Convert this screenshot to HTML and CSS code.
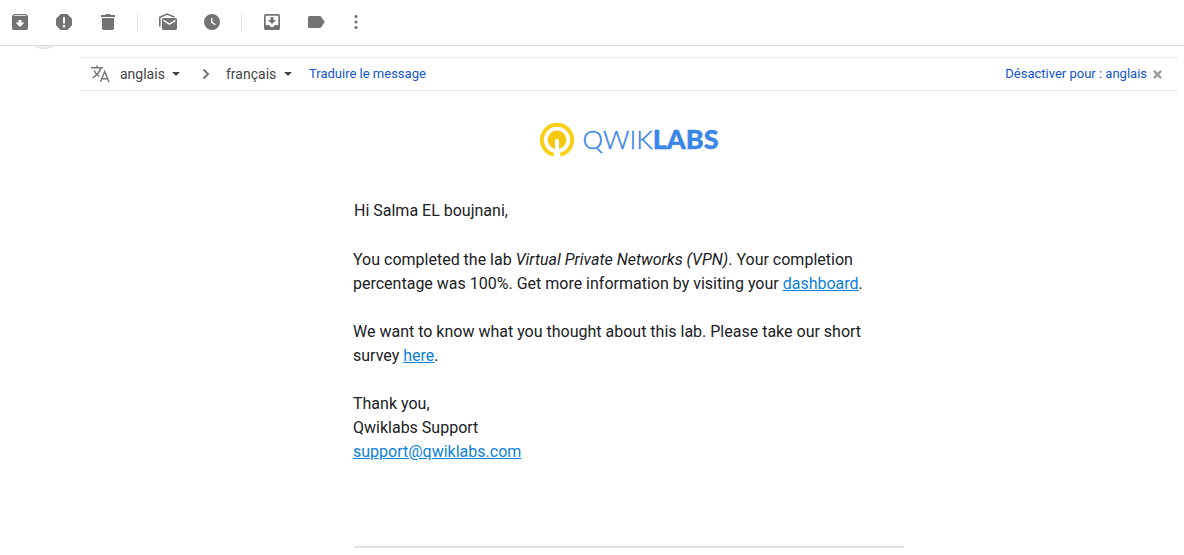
FILE: index.html
```html
<!DOCTYPE html>
<html lang="fr">
<head>
<meta charset="utf-8">
<meta name="viewport" content="width=device-width, initial-scale=1">
<title>Qwiklabs</title>
<link rel="stylesheet" href="styles.css">
</head>
<body>
<header class="toolbar">
  <div class="group">
    <button class="tool" type="button" aria-label="Archiver"><svg viewBox="0 0 20 20"><path fill-rule="evenodd" d="M4 2h12l2 2v12.300a1.700 1.700 0 0 1-1.700 1.700H3.700A1.700 1.700 0 0 1 2 16.300V4zM4.300 3.200 3.700 4h12.600l-.6-.8zM8.500 8v2.500H5.500L10 15l4.500-4.500h-3V8z"/></svg></button>
    <button class="tool" type="button" aria-label="Signaler comme spam"><svg viewBox="0 0 20 20"><path fill-rule="evenodd" d="M6.700 2h6.600L18 6.700v6.600L13.300 18H6.700L2 13.300V6.700zM9 5v6.500h2V5zM10 12.900a1.300 1.300 0 1 0 0 2.600 1.300 1.300 0 0 0 0-2.600z"/></svg></button>
    <button class="tool" type="button" aria-label="Supprimer"><svg viewBox="0 0 20 20"><path d="M3 3h4l1-1h4l1 1h4v2H3zM4 6h12v10.300a1.700 1.700 0 0 1-1.700 1.700H5.700A1.700 1.700 0 0 1 4 16.300z"/></svg></button>
  </div>
  <div class="group">
    <button class="tool" type="button" aria-label="Marquer comme non lu"><svg viewBox="0 0 20 20"><path fill="none" stroke="currentColor" stroke-width="1.600" d="M1.800 14.500V5.300L9 2l7.500 3"/><path fill-rule="evenodd" d="M5.500 6h12A1.500 1.500 0 0 1 19 7.500v9a1.500 1.500 0 0 1-1.500 1.500h-12A1.500 1.500 0 0 1 4 16.500v-9A1.500 1.500 0 0 1 5.500 6zM5.500 7.500v1.700l6 3.800 6-3.800V7.500l-6 3.800z"/></svg></button>
    <button class="tool" type="button" aria-label="Mettre en attente"><svg viewBox="0 0 20 20"><path fill-rule="evenodd" d="M10 2a8 8 0 1 1 0 16 8 8 0 0 1 0-16zM9 6v4.700l4 2.500.8-1.300-3.300-2V6z"/></svg></button>
  </div>
  <div class="group">
    <button class="tool" type="button" aria-label="Déplacer vers"><svg viewBox="0 0 20 20"><path fill-rule="evenodd" d="M3.700 2h12.600A1.700 1.700 0 0 1 18 3.700v12.600a1.700 1.700 0 0 1-1.700 1.700H3.700A1.700 1.700 0 0 1 2 16.300V3.700A1.700 1.700 0 0 1 3.700 2zM3.700 3.700v9.300h3.500a2.900 2.900 0 0 0 5.600 0h3.500V3.700z"/><path d="M8.500 5h3v3H14l-4 4-4-4h2.500z"/></svg></button>
    <button class="tool" type="button" aria-label="Libellés"><svg viewBox="0 0 20 20"><path d="M3.500 4h10.300q.8 0 1.300.7L18.800 10l-3.700 5.300q-.5.700-1.300.7H3.500Q2 16 2 14.500v-9Q2 4 3.500 4z"/></svg></button>
  </div>
  <button class="tool more" type="button" aria-label="Plus"><svg viewBox="0 0 20 20"><circle cx="10" cy="4.500" r="1.600"/><circle cx="10" cy="10" r="1.600"/><circle cx="10" cy="15.500" r="1.600"/></svg></button>
</header>
<main class="thread">
  <div class="sender"><div class="avatar"></div></div>
  <div class="message">
    <div class="translate">
      <svg class="translate-icon" viewBox="0 0 20 20"><g fill="none" stroke="currentColor" stroke-width="1.500"><path d="M1 3.700h12M7 1.500v2.200M10.800 4C10 7.500 7 11 2.500 14M4 6.500c1 2.300 3 4.300 5.200 6"/><path d="m10.500 18 4.200-10.500L18.900 18M12 14.800h5.500"/></g></svg>
      <label class="language"><select aria-label="Langue source"><option>anglais</option></select><svg class="caret" viewBox="0 0 8 4"><path d="M0 0h8L4 4z"/></svg></label>
      <svg class="chevron" viewBox="0 0 8 12"><path d="m1.500 1.500 4.500 4.500-4.500 4.500"/></svg>
      <label class="language"><select aria-label="Langue cible"><option>français</option></select><svg class="caret" viewBox="0 0 8 4"><path d="M0 0h8L4 4z"/></svg></label>
      <a class="action" href="#">Traduire le message</a>
      <a class="action disable" href="#">Désactiver pour : anglais</a>
      <button class="close" type="button" aria-label="Fermer"><svg viewBox="0 0 8 8"><path d="m.8.800 6.400 6.400M7.200.800.8 7.200"/></svg></button>
    </div>
    <article class="email">
      <div class="logo">
        <svg class="mark" viewBox="0 0 36 36"><path fill="none" stroke="#f9cf17" stroke-width="4" d="M14.700 32.650A15.100 15.100 0 1 1 21.300 32.650"/><path fill="#f5c80f" d="M15.500 26.700A9.300 9.300 0 1 1 20.500 26.700z"/><path fill="#fff" d="M16 35V18.500q0-1.500 2-1.500t2 1.500V35z"/></svg>
        <span class="wordmark">QWIK<b>LABS</b></span>
      </div>
      <p class="greeting">Hi Salma EL boujnani,</p>
      <div class="copy">
        <p>You completed the lab <i>Virtual Private Networks (VPN)</i>. Your completion percentage was 100%. Get more information by visiting your <a href="#">dashboard</a>.</p>
        <p>We want to know what you thought about this lab. Please take our short survey <a href="#">here</a>.</p>
        <p>Thank you,<br>Qwiklabs Support<br><a href="#">support@qwiklabs.com</a></p>
      </div>
      <hr class="rule">
    </article>
  </div>
</main>
</body>
</html>
```

FILE: styles.css
```css
* { box-sizing: border-box; }

body {
  margin: 0;
  background: #fff;
  color: #202124;
  font-family: Roboto, "Liberation Sans", sans-serif;
}

button {
  padding: 0;
  border: 0;
  background: none;
  cursor: pointer;
}

svg { display: block; }

.toolbar {
  display: flex;
  align-items: center;
  padding: 12px 10px 13px;
  border-bottom: 1px solid #dadada;
}

.group {
  display: flex;
  gap: 24px;
}

.group + .group {
  margin-left: 19px;
  padding-left: 20px;
  border-left: 1px solid #e8e8e8;
}

.tool {
  width: 20px;
  height: 20px;
  color: #737373;
}

.tool svg {
  width: 20px;
  height: 20px;
  fill: currentColor;
}

.more { margin-left: 20px; }

.thread {
  display: flex;
  overflow: hidden;
}

.sender {
  flex: 0 0 80px;
  padding-left: 24px;
}

.avatar {
  width: 40px;
  height: 40px;
  margin-top: -37px;
  border: 1px solid #e0e0e0;
  border-radius: 50%;
  background: #f0f0f0;
}

.message {
  flex: 1;
  padding: 11px 6px 0 0;
}

.translate {
  display: flex;
  align-items: center;
  height: 34px;
  padding: 0 16px 0 10px;
  border-top: 1px solid #ebebeb;
  border-bottom: 1px solid #ebebeb;
}

.translate-icon {
  width: 20px;
  height: 20px;
  margin-right: 10px;
  color: #777;
}

.language {
  display: flex;
  align-items: center;
  gap: 7px;
}

.language select {
  padding: 0;
  border: 0;
  appearance: none;
  background: none;
  color: #444;
  font: 14px/20px Roboto, "Liberation Sans", sans-serif;
}

.caret {
  width: 8px;
  height: 4px;
  fill: #444;
}

.chevron {
  width: 8px;
  height: 12px;
  margin: 0 16px 0 22px;
  fill: none;
  stroke: #777;
  stroke-width: 2;
}

.action {
  margin-left: 17px;
  color: #15c;
  font-size: 13px;
  line-height: 20px;
  text-decoration: none;
}

.disable { margin-left: auto; }

.close { margin-left: 6px; }

.close svg {
  width: 9px;
  height: 9px;
  stroke: #999;
  stroke-width: 2;
}

.email {
  max-width: 550px;
  margin: 0 auto;
  padding: 31px 0 7px;
  font-size: 16px;
  line-height: 24px;
}

.logo {
  display: flex;
  justify-content: center;
  gap: 7px;
  height: 36px;
}

.mark {
  width: 36px;
  height: 36px;
}

.wordmark {
  color: #3a86e8;
  font: 300 26px/34px Lato, sans-serif;
  -webkit-text-stroke: 0.4px #3a86e8;
}

.wordmark b {
  font-size: 27px;
  font-weight: 900;
}

.email p { margin: 0; }

.email .greeting {
  margin-top: 41px;
}

.copy {
  display: grid;
  gap: 24px;
  margin: 25px 0 82px -1px;
}

.copy a { color: #0b7fe0; }

.rule {
  height: 2px;
  margin: 0;
  border: 0;
  background: #e0e0e5;
}
```
